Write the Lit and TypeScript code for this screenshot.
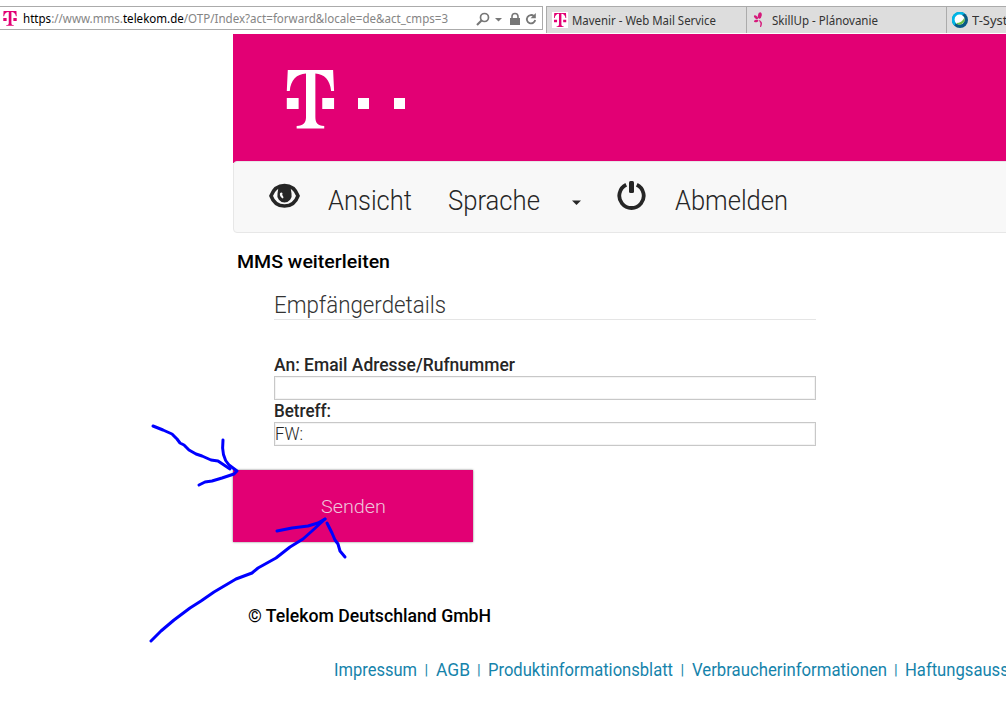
import { LitElement, html, svg, css } from "lit";
import { customElement, property } from "lit/decorators.js";

/** A single line of text condensed or widened to a given width. */
@customElement("fit-text")
class FitText extends LitElement {
  @property({ type: Number }) width = 0;

  static styles = css`
    :host { display: block; flex: none; white-space: nowrap; }
    .run { display: inline-block; transform-origin: 0 50%; }
  `;

  render() {
    return html`<span class="run"><slot></slot></span>`;
  }

  firstUpdated() {
    const run = this.renderRoot.querySelector(".run") as HTMLElement;
    this.style.width = `${this.width}px`;
    const fit = () => {
      run.style.transform = "none";
      const natural = run.getBoundingClientRect().width;
      if (natural > 0) run.style.transform = `scaleX(${this.width / natural})`;
    };
    fit();
    document.fonts?.ready.then(fit);
  }
}

const tGlyph = svg`
  <path d="M1 0H47L48 21H45C44 10 38 4 29 3.500V47C29 53 31 55.500 38 56V58.500H10V56C17 55.500 19.500 53 19.500 47V3.500C10 4 4 10 3 21H0Z"/>
  <path d="M0 28H12V39H0ZM36 28H48V39H36Z"/>`;

const LINKS: [string, number][] = [
  ["Impressum", 83],
  ["AGB", 34],
  ["Produktinformationsblatt", 185],
  ["Verbraucherinformationen", 195],
  ["Haftungsausschluss", 152],
];

@customElement("app-root")
class AppRoot extends LitElement {
  static styles = css`
    :host {
      display: block; position: relative; width: 1006px; height: 727px;
      overflow: hidden; background: #fff; color: #262626;
      font-family: Roboto, "Liberation Sans", sans-serif; font-weight: 300;
    }
    * { box-sizing: border-box; }
    svg { display: block; flex: none; }
    .chrome {
      display: flex; height: 34px; padding-top: 6px;
      font: 400 12px/16px "Noto Sans", "Open Sans", sans-serif; color: #333;
    }
    .address {
      display: flex; width: 543px; height: 24px; margin-right: 3px; padding: 4px 0 0 3px;
      border: 1px solid #ababab; border-left: 0; color: #858585;
    }
    .address .fav { margin-right: 6px; }
    .address b { font-weight: 400; color: #000; }
    .tools { display: flex; margin-left: 27px; }
    .tabs { display: flex; flex: 1; height: 27px; overflow: hidden; }
    .tab {
      display: flex; flex: none; width: 200px; padding: 5px 0 0 5px; gap: 4px;
      background: #ddd; border: 1px solid #ababab; border-width: 1px 0 0 1px;
    }
    .tab fit-text { padding-top: 1px; }
    .page { margin-left: 233px; }
    .brand { height: 129px; padding: 36px 0 0 53px; background: #e20074; }
    .nav {
      position: relative; display: flex; height: 72px; margin: -2px -6px 0 0; padding-left: 35px;
      background: #f8f8f8; border: 1px solid #e7e7e7; border-radius: 4px;
      font-size: 27px; line-height: 32px; color: #262626;
    }
    .nav fit-text { margin-top: 23px; }
    .eye { margin: 21px 28px 0 0; }
    .ansicht { margin-right: 36px; }
    .caret { margin: 38px 36px 0 32px; }
    .power { margin: 18px 29px 0 0; }
    h1 { margin: 18px 0 0 4px; font-size: 19px; line-height: 22px; font-weight: 500; color: #000; }
    .form { width: 542px; margin: 19px 0 0 41px; font-size: 18px; line-height: 20px; }
    h2 {
      height: 28px; margin: 0 0 35px; padding-top: 1px; font-size: 23px; line-height: 26px;
      font-weight: 300; border-bottom: 1px solid #e5e5e5; color: #333;
    }
    .label { height: 21px; font-weight: 500; color: #262626; }
    .field {
      height: 24px; margin-bottom: 1px; padding: 1px 0 0;
      border: 1px solid #c8c8c8; box-shadow: inset 0 0 0 1px #f4f4f4; background: #fff;
    }
    .send {
      display: flex; width: 240px; height: 72px; margin-top: 23.500px;
      padding: 26px 0 0 87px; border: 0; background: #e20074; color: #efc4da;
      box-shadow: 0 0 2px #777; font: 300 19px/22px Roboto, sans-serif;
    }
    .copy { margin: 64.500px 0 0 15px; font-size: 18px; line-height: 20px; font-weight: 500; color: #000; }
    .links {
      display: flex; margin: 34px 0 0 101px; font-size: 17.500px; line-height: 20px;
      font-weight: 400; color: #1583ab;
    }
    .bar { flex: none; width: 18.500px; font-size: 15px; text-align: center; }
    .ink { position: absolute; left: 0; top: 0; }
  `;

  render() {
    return html`
      <div class="chrome">
        <div class="address">
          <svg class="fav" width="14" height="15" viewBox="-1 0 50 59" preserveAspectRatio="none" fill="#e20074">${tGlyph}</svg>
          <fit-text width="425"><b>https</b>://www.mms.<b>telekom.de</b>/OTP/Index?act=forward&amp;locale=de&amp;act_cmps=3</fit-text>
          <div class="tools">
            <svg width="66" height="16" viewBox="475 10 66 16" fill="none" stroke="#777">
              <circle cx="484.500" cy="16.500" r="4" stroke-width="1.700"/>
              <path d="M481.500 19.500L477 24" stroke-width="2.200"/>
              <path d="M495 17H502L498.500 20.500Z" fill="#777" stroke="none"/>
              <path d="M510 17H520V24H510Z" fill="#777" stroke="none"/>
              <path d="M512 18V15.500A3 3 0 0 1 518 15.500V18" stroke-width="1.600"/>
              <path d="M534 15.200A4.200 4.200 0 1 0 535.200 19" stroke-width="1.800"/>
              <path d="M535.800 12V17.200H530.600Z" fill="#777" stroke="none"/>
            </svg>
          </div>
        </div>
        <div class="tabs">
          <div class="tab">
            <svg width="16" height="16" viewBox="0 0 16 16">
              <path fill="#fff" d="M0 0H16V16H0Z"/>
              <g fill="#e20074" transform="translate(2 1) scale(.255 .24)">${tGlyph}</g>
            </svg>
            <fit-text width="144">Mavenir - Web Mail Service</fit-text>
          </div>
          <div class="tab">
            <svg width="16" height="16" viewBox="0 0 16 16" fill="#d5197b">
              <ellipse cx="7.800" cy="3.500" rx="1.900" ry="3.300" transform="rotate(10 7.800 3.500)"/>
              <ellipse cx="4" cy="5.200" rx="1.400" ry="2.500" transform="rotate(-50 4 5.200)"/>
              <ellipse cx="4.200" cy="9" rx="2.300" ry="1.200" transform="rotate(-15 4.200 9)"/>
              <path d="M7.500 8.500Q11 10 8.500 15Q9.800 11.500 7.500 8.500Z" stroke="#d5197b" stroke-width=".8"/>
            </svg>
            <fit-text width="106">SkillUp - Plánovanie</fit-text>
          </div>
          <div class="tab">
            <svg width="16" height="16" viewBox="0 0 16 16">
              <circle cx="8" cy="8" r="8" fill="#075b86"/>
              <path d="M2.400 13.700A8 8 0 0 1 13 1.700Q7 3 2.400 13.700Z" fill="#00b5e5"/>
              <circle cx="7.600" cy="7.600" r="5" fill="#fff"/>
              <path d="M12.300 5.800A5 5 0 0 1 4 11Q10 11 12.300 5.800Z" fill="#6cbe45"/>
            </svg>
            <fit-text width="61">T-Systems</fit-text>
          </div>
        </div>
      </div>

      <div class="page">
        <div class="brand">
          <svg width="122" height="60" viewBox="-.8 0 122 60" fill="#fff">
            <g transform="scale(.985 1)">${tGlyph}</g>
            <path d="M71.200 28H82.200V39H71.200ZM107.200 28H118.200V39H107.200Z"/>
          </svg>
        </div>
        <div class="nav">
          <svg class="eye" width="31" height="26" viewBox="0 0 31 26">
            <path d="M15.500 2.500C22.500 2.500 27 7.500 29 12.800C27 18.500 22.500 23 15.500 23S4 18.500 2 12.800C4 7.500 8.500 2.500 15.500 2.500Z" fill="none" stroke="#262626" stroke-width="3.600"/>
            <path d="M9.500 4Q15.500 1 21.500 4L22.500 10.500A7.200 7.200 0 1 1 8.500 10.500Z" fill="#262626"/>
            <path d="M11.200 10C10.200 12 11.800 14.500 13.800 15.500C14.800 15 14.500 14 13.700 12.800C13.100 11.700 13.200 11 13.600 10.200C13 9.300 12 9.200 11.200 10Z" fill="#f8f8f8"/>
          </svg>
          <fit-text class="ansicht" width="84">Ansicht</fit-text>
          <fit-text width="92">Sprache</fit-text>
          <svg class="caret" width="9" height="5" viewBox="0 0 9 5"><path d="M0 .5H9L4.500 5Z" fill="#262626"/></svg>
          <svg class="power" width="29" height="31" viewBox="0 0 29 31">
            <path d="M9.200 4.800A12.200 12.200 0 1 0 19.800 4.800" fill="none" stroke="#262626" stroke-width="3.800"/>
            <path d="M12 2.500Q12 1 13.500 1H15.500Q17 1 17 2.500V11.500Q17 13 15.500 13H13.500Q12 13 12 11.500Z" fill="#262626"/>
          </svg>
          <fit-text width="113">Abmelden</fit-text>
        </div>

        <h1><fit-text width="153">MMS weiterleiten</fit-text></h1>
        <div class="form">
          <h2><fit-text width="172">Empfängerdetails</fit-text></h2>
          <div class="label"><fit-text width="241">An: Email Adresse/Rufnummer</fit-text></div>
          <div class="field"></div>
          <div class="label"><fit-text width="57">Betreff:</fit-text></div>
          <div class="field"><fit-text width="28">FW:</fit-text></div>
        </div>
        <button class="send"><fit-text width="65">Senden</fit-text></button>
        <div class="copy"><fit-text width="243">© Telekom Deutschland GmbH</fit-text></div>
        <div class="links">
          ${LINKS.map(([label, width], i) => html`
            ${i ? html`<span class="bar">|</span>` : ""}
            <fit-text width=${width}>${label}</fit-text>`)}
        </div>
      </div>

      <svg class="ink" width="1006" height="727" viewBox="0 0 1006 727" fill="none" stroke="#00f" stroke-width="3" stroke-linecap="round" stroke-linejoin="round">
        <path d="M153 426L163 430L172 434L177 439L180 443L184 445L189 450L196 454L202 456L211 460L218 461L224 465L230 469"/>
        <path d="M223 440Q221 457 229 465L237 471L234 474L222 478L212 481L205 482L199 485"/>
        <path d="M151 641L161 631L174 620L190 608L201 601L214 592L236 579L252 573L258 568L276 558L290 547L303 539L312 531L325 519"/>
        <path d="M277 531L292 528L308 526L318 523L325 519"/>
        <path d="M327 523L332 533L335 540L338 544L340 551L345 557"/>
      </svg>
    `;
  }
}
